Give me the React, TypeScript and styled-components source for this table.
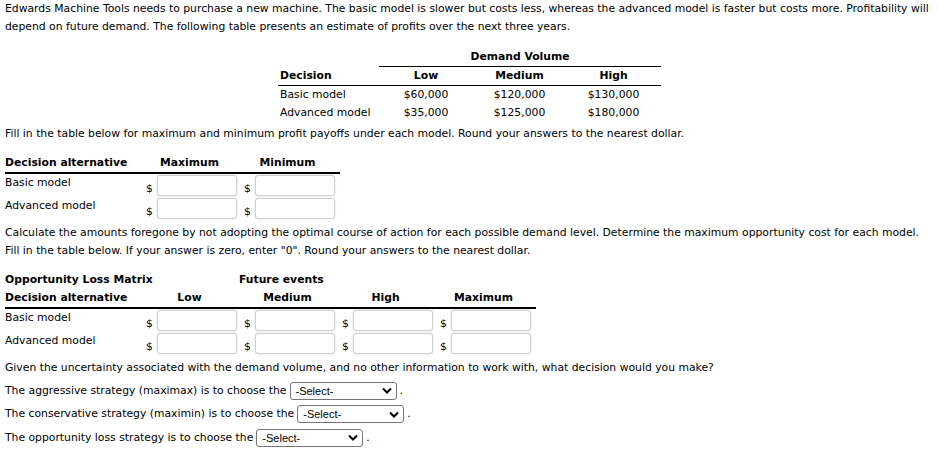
import styled, { createGlobalStyle } from "styled-components";

const GlobalStyle = createGlobalStyle`
  body {
    margin: 0;
    background: #fff;
    color: #000;
    font-family: "DejaVu Sans", Verdana, sans-serif;
    font-size: 10.8px;
  }
`;

const Page = styled.div`
  padding: 0 5px;
  line-height: 18px;
`;

const Para = styled.p<{ gap?: number }>`
  margin: 0 0 ${(props) => props.gap ?? 0}px 0;
`;

const ProfitTable = styled.table`
  border-collapse: collapse;
  margin: 12px 0 3px 273px;
  td,
  th {
    padding: 0 2px;
    height: 18px;
  }
  th {
    font-weight: bold;
  }
`;

const SpanHead = styled.th`
  border-bottom: 1px solid #000;
  text-align: center;
`;

const HeadCell = styled.th<{ align?: string; width?: number }>`
  text-align: ${(props) => props.align || "center"};
  width: ${(props) => (props.width ? `${props.width}px` : "auto")};
  border-bottom: 1px solid #000;
`;

const ValueCell = styled.td<{ align?: string }>`
  text-align: ${(props) => props.align || "center"};
`;

const AnswerTable = styled.table<{ cols: number; top?: number; bottom?: number }>`
  border-collapse: collapse;
  table-layout: fixed;
  width: ${(props) => 139 + props.cols * 98}px;
  margin: ${(props) => props.top ?? 0}px 0 ${(props) => props.bottom ?? 0}px 0;
  td,
  th {
    padding: 0;
  }
`;

const TopHead = styled.th<{ align?: string; shift?: number }>`
  text-align: ${(props) => props.align || "left"};
  font-weight: bold;
  height: 18px;
  white-space: nowrap;
  text-indent: ${(props) => props.shift ?? 0}px;
`;

const ColHead = styled.th<{ align?: string }>`
  text-align: ${(props) => props.align || "center"};
  font-weight: bold;
  height: 18px;
  white-space: nowrap;
  border-bottom: 2px solid #000;
  padding-right: ${(props) => (props.align === "left" ? 0 : 7)}px !important;
`;

const RowLabel = styled.td`
  vertical-align: top;
  white-space: nowrap;
  height: 22px;
`;

const Dollar = styled.td`
  vertical-align: bottom;
  line-height: 16px;
  padding-left: 2px !important;
`;

const InputCell = styled.td`
  padding: 1px 0 !important;
`;

const NumInput = styled.input`
  box-sizing: border-box;
  width: 80px;
  height: 21px;
  border: 1px solid #cfcfcf;
  border-radius: 3px;
  box-shadow: 0 0 2px rgba(0, 0, 0, 0.15);
  background: #fff;
  margin: 0 0 0 1px;
  display: block;
`;

const ChoiceLine = styled.div`
  display: flex;
  align-items: center;
  height: 23.5px;
  gap: 3px;
  white-space: nowrap;
`;

const SelectBox = styled.div<{ width: number }>`
  box-sizing: border-box;
  width: ${(props) => props.width}px;
  height: 18px;
  border: 1px solid #767676;
  border-radius: 3px;
  display: flex;
  align-items: center;
  justify-content: space-between;
  padding: 0 4px 0 5px;
  font-family: "Liberation Sans", Arial, sans-serif;
  font-size: 11px;
  color: #000;
  background: #fff;
`;

const Chevron = () => (
  <svg width="10" height="7" viewBox="0 0 10 7">
    <path d="M1 1.5 L5 5.5 L9 1.5" fill="none" stroke="#000" strokeWidth="2" />
  </svg>
);

const Select = ({ width }: { width: number }) => (
  <SelectBox width={width}>
    <span>-Select-</span>
    <Chevron />
  </SelectBox>
);

const Answer = () => (
  <>
    <Dollar>$</Dollar>
    <InputCell>
      <NumInput type="text" />
    </InputCell>
  </>
);

const AnswerCols = ({ count }: { count: number }) => (
  <colgroup>
    <col style={{ width: 139 }} />
    {Array.from({ length: count }).map((_, i) => [
      <col key={`d${i}`} style={{ width: 12 }} />,
      <col key={`i${i}`} style={{ width: 86 }} />,
    ])}
  </colgroup>
);

const profits = [
  { name: "Basic model", low: "$60,000", med: "$120,000", high: "$130,000" },
  { name: "Advanced model", low: "$35,000", med: "$125,000", high: "$180,000" },
];

const models = ["Basic model", "Advanced model"];

const App = () => {
  return (
    <Page>
      <GlobalStyle />
      <Para>
        Edwards Machine Tools needs to purchase a new machine. The basic model is slower but costs less, whereas the
        advanced model is faster but costs more. Profitability will depend on future demand. The following table presents
        an estimate of profits over the next three years.
      </Para>
      <ProfitTable>
        <thead>
          <tr>
            <th />
            <SpanHead colSpan={3}>Demand Volume</SpanHead>
          </tr>
          <tr>
            <HeadCell align="left" width={97}>
              Decision
            </HeadCell>
            <HeadCell width={90}>Low</HeadCell>
            <HeadCell width={89}>Medium</HeadCell>
            <HeadCell width={91}>High</HeadCell>
          </tr>
        </thead>
        <tbody>
          {profits.map((row) => (
            <tr key={row.name}>
              <ValueCell align="left">{row.name}</ValueCell>
              <ValueCell>{row.low}</ValueCell>
              <ValueCell>{row.med}</ValueCell>
              <ValueCell>{row.high}</ValueCell>
            </tr>
          ))}
        </tbody>
      </ProfitTable>
      <Para>
        Fill in the table below for maximum and minimum profit payoffs under each model. Round your answers to the nearest
        dollar.
      </Para>
      <AnswerTable cols={2} top={11} bottom={4}>
        <AnswerCols count={2} />
        <thead>
          <tr>
            <ColHead align="left">Decision alternative</ColHead>
            <ColHead colSpan={2}>Maximum</ColHead>
            <ColHead colSpan={2}>Minimum</ColHead>
          </tr>
        </thead>
        <tbody>
          {models.map((name) => (
            <tr key={name}>
              <RowLabel>{name}</RowLabel>
              <Answer />
              <Answer />
            </tr>
          ))}
        </tbody>
      </AnswerTable>
      <Para gap={11}>
        Calculate the amounts foregone by not adopting the optimal course of action for each possible demand level.
        Determine the maximum opportunity cost for each model. Fill in the table below. If your answer is zero, enter
        "0". Round your answers to the nearest dollar.
      </Para>
      <AnswerTable cols={4} bottom={4}>
        <AnswerCols count={4} />
        <thead>
          <tr>
            <TopHead>Opportunity Loss Matrix</TopHead>
            <th colSpan={2} />
            <TopHead colSpan={2} shift={-3}>
              Future events
            </TopHead>
            <th colSpan={4} />
          </tr>
          <tr>
            <ColHead align="left">Decision alternative</ColHead>
            <ColHead colSpan={2}>Low</ColHead>
            <ColHead colSpan={2}>Medium</ColHead>
            <ColHead colSpan={2}>High</ColHead>
            <ColHead colSpan={2}>Maximum</ColHead>
          </tr>
        </thead>
        <tbody>
          {models.map((name) => (
            <tr key={name}>
              <RowLabel>{name}</RowLabel>
              <Answer />
              <Answer />
              <Answer />
              <Answer />
            </tr>
          ))}
        </tbody>
      </AnswerTable>
      <Para gap={2}>
        Given the uncertainty associated with the demand volume, and no other information to work with, what decision
        would you make?
      </Para>
      <ChoiceLine>
        The aggressive strategy (maximax) is to choose the <Select width={107} />.
      </ChoiceLine>
      <ChoiceLine>
        The conservative strategy (maximin) is to choose the <Select width={107} />.
      </ChoiceLine>
      <ChoiceLine>
        The opportunity loss strategy is to choose the <Select width={107} />.
      </ChoiceLine>
    </Page>
  );
};

export default App;
